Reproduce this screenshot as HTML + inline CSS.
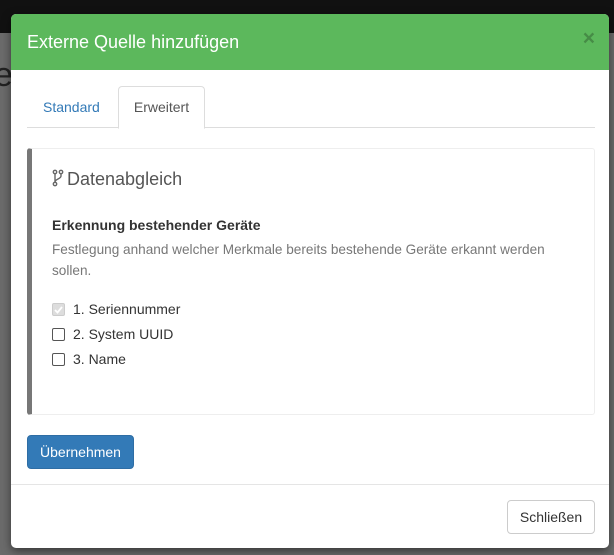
<!DOCTYPE html>
<html><head><style>
body{margin:0;width:614px;height:555px;overflow:hidden;background:#6b6b6b;font-family:"Liberation Sans",sans-serif;font-size:14px;color:#333;position:relative}
.top{position:absolute;left:0;top:0;width:614px;height:33px;background:#111}
.bg{position:absolute;color:#222;font-size:34px;left:-6px;top:56px}
.modal{position:absolute;left:11px;top:14px;width:598px;height:534px;background:#fff;border-radius:5px;overflow:hidden;box-shadow:0 3px 9px rgba(0,0,0,.5)}
.hd{height:56px;background:#5cb85c;color:#fff;font-size:18px;line-height:56px;padding-left:16px;position:relative}
.x{position:absolute;right:14px;top:-3px;font-size:21px;font-weight:bold;color:#3d7a3d;opacity:.7}
.nav{position:absolute;left:16px;top:72px;width:568px;height:41px;border-bottom:1px solid #ddd}
.t1{position:absolute;left:16px;top:13px;color:#337ab7}
.t2{position:absolute;left:91px;top:0;width:85px;height:41px;border:1px solid #ddd;border-bottom:1px solid #fff;border-radius:4px 4px 0 0;background:#fff;text-align:center;line-height:41px;color:#555}
.panel{position:absolute;left:16px;top:134px;width:562px;height:265px;border:1px solid #eee;border-left:5px solid #777;border-radius:3px}
.h{position:absolute;left:20px;top:20px;font-size:18px;color:#555}
.b{position:absolute;left:20px;top:68px;font-weight:bold}
.d{position:absolute;left:20px;top:90px;color:#777;line-height:21px;width:535px;font-size:13.6px}
.c{position:absolute;left:20px;display:flex;align-items:center}
.c i{display:inline-block;width:11px;height:11px;border:1px solid #555;border-radius:2px;margin-right:8px;background:#fff;position:relative}
.btn{position:absolute;left:16px;top:421px;background:#337ab7;border:1px solid #2e6da4;border-radius:4px;color:#fff;text-align:center;line-height:32px;box-sizing:border-box;width:107px;height:34px}
.ft{position:absolute;left:0;top:470px;width:598px;border-top:1px solid #e5e5e5}
.cl{position:absolute;left:496px;top:486px;width:88px;height:34px;border:1px solid #ccc;border-radius:4px;box-sizing:border-box;text-align:center;line-height:32px}
</style></head><body>
<div class="top"></div>
<div class="bg">e</div>
<div class="modal">
<div class="hd">Externe Quelle hinzufügen<span class="x">×</span></div>
<div class="nav"><span class="t1">Standard</span><div class="t2">Erweitert</div></div>
<div class="panel">
<div class="h"><svg width="12" height="18" viewBox="0 0 12 18" style="vertical-align:-2px;margin-right:3px"><g fill="none" stroke="#666" stroke-width="1.4"><circle cx="3" cy="3" r="1.7"/><circle cx="9" cy="3" r="1.7"/><circle cx="3" cy="15" r="1.7"/><path d="M3 5v8M9 5v2c0 3-6 3-6 6"/></g></svg>Datenabgleich</div>
<div class="b">Erkennung bestehender Geräte</div>
<div class="d">Festlegung anhand welcher Merkmale bereits bestehende Geräte erkannt werden sollen.</div>
<div class="c" style="top:152px"><i style="border-color:#ccc;background:#ddd"><svg width="11" height="11" viewBox="0 0 11 11" style="position:absolute;left:0;top:0"><path d="M2 6l2.5 2.5L9 3" fill="none" stroke="#fff" stroke-width="1.8"/></svg></i>1. Seriennummer</div>
<div class="c" style="top:177px"><i></i>2. System UUID</div>
<div class="c" style="top:202px"><i></i>3. Name</div>
</div>
<div class="btn">Übernehmen</div>
<div class="ft"></div>
<div class="cl">Schließen</div>
</div>
</body></html>
